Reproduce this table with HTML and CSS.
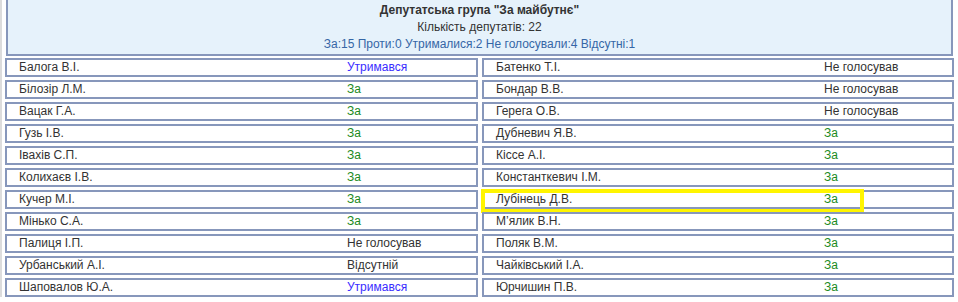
FILE: index.html
```html
<!DOCTYPE html>
<html lang="uk">
<head>
<meta charset="utf-8">
<title>Депутатська група "За майбутнє"</title>
<link rel="stylesheet" href="styles.css">
</head>
<body>
<div class="page">
  <div class="group-head">
    <div class="title">Депутатська група "За майбутнє"</div>
    <div class="count">Кількість депутатів: 22</div>
    <div class="stats">За:15 Проти:0 Утрималися:2 Не голосували:4 Відсутні:1</div>
  </div>
  <div class="grid">
    <div class="cell"><span class="name">Балога В.І.</span><span class="vote abst">Утримався</span></div>
    <div class="cell"><span class="name">Батенко Т.І.</span><span class="vote">Не голосував</span></div>
    <div class="cell"><span class="name">Білозір Л.М.</span><span class="vote yes">За</span></div>
    <div class="cell"><span class="name">Бондар В.В.</span><span class="vote">Не голосував</span></div>
    <div class="cell"><span class="name">Вацак Г.А.</span><span class="vote yes">За</span></div>
    <div class="cell"><span class="name">Герега О.В.</span><span class="vote">Не голосував</span></div>
    <div class="cell"><span class="name">Гузь І.В.</span><span class="vote yes">За</span></div>
    <div class="cell"><span class="name">Дубневич Я.В.</span><span class="vote yes">За</span></div>
    <div class="cell"><span class="name">Івахів С.П.</span><span class="vote yes">За</span></div>
    <div class="cell"><span class="name">Кіссе А.І.</span><span class="vote yes">За</span></div>
    <div class="cell"><span class="name">Колихаєв І.В.</span><span class="vote yes">За</span></div>
    <div class="cell"><span class="name">Константкевич І.М.</span><span class="vote yes">За</span></div>
    <div class="cell"><span class="name">Кучер М.І.</span><span class="vote yes">За</span></div>
    <div class="cell"><span class="name">Лубінець Д.В.</span><span class="vote yes">За</span><span class="highlight"></span></div>
    <div class="cell"><span class="name">Мінько С.А.</span><span class="vote yes">За</span></div>
    <div class="cell"><span class="name">М’ялик В.Н.</span><span class="vote yes">За</span></div>
    <div class="cell"><span class="name">Палиця І.П.</span><span class="vote">Не голосував</span></div>
    <div class="cell"><span class="name">Поляк В.М.</span><span class="vote yes">За</span></div>
    <div class="cell"><span class="name">Урбанський А.І.</span><span class="vote">Відсутній</span></div>
    <div class="cell"><span class="name">Чайківський І.А.</span><span class="vote yes">За</span></div>
    <div class="cell"><span class="name">Шаповалов Ю.А.</span><span class="vote abst">Утримався</span></div>
    <div class="cell"><span class="name">Юрчишин П.В.</span><span class="vote yes">За</span></div>
  </div>
</div>
</body>
</html>
```
FILE: styles.css
```css
html, body {
  margin: 0;
  padding: 0;
  background: #ffffff;
}

body {
  font-family: "Liberation Sans", Arial, sans-serif;
  font-size: 12px;
  color: #333333;
  overflow: hidden;
}

.page {
  width: 952px;
  height: 297px;
  border-left: 2px solid #dcdcdc;
  padding-left: 3px;
  box-sizing: border-box;
}

.group-head {
  margin: 0 0 2px 1px;
  width: 947px;
  box-sizing: border-box;
  background: #e6f2fb;
  border: 2px solid #8797bb;
  border-top: none;
  padding: 2px 0 1px;
  text-align: center;
  line-height: 17px;
}

.title {
  font-weight: bold;
}

.stats {
  color: #3566a6;
}

.grid {
  display: grid;
  grid-template-columns: 473px 472px;
  column-gap: 4px;
  row-gap: 3px;
}

.cell {
  position: relative;
  display: grid;
  grid-template-columns: 328px 1fr;
  height: 19px;
  box-sizing: border-box;
  border: 2px solid #8797bb;
  padding-left: 12px;
  line-height: 15px;
  white-space: nowrap;
}

.name {
  color: #333333;
}

.vote {
  color: #333333;
}

.vote.yes {
  color: #1b8a1b;
}

.vote.abst {
  color: #3a2cff;
}

.highlight {
  position: absolute;
  left: -3px;
  top: -3px;
  width: 383px;
  height: 24px;
  box-sizing: border-box;
  border: 4px solid #fff500;
  pointer-events: none;
}
```
